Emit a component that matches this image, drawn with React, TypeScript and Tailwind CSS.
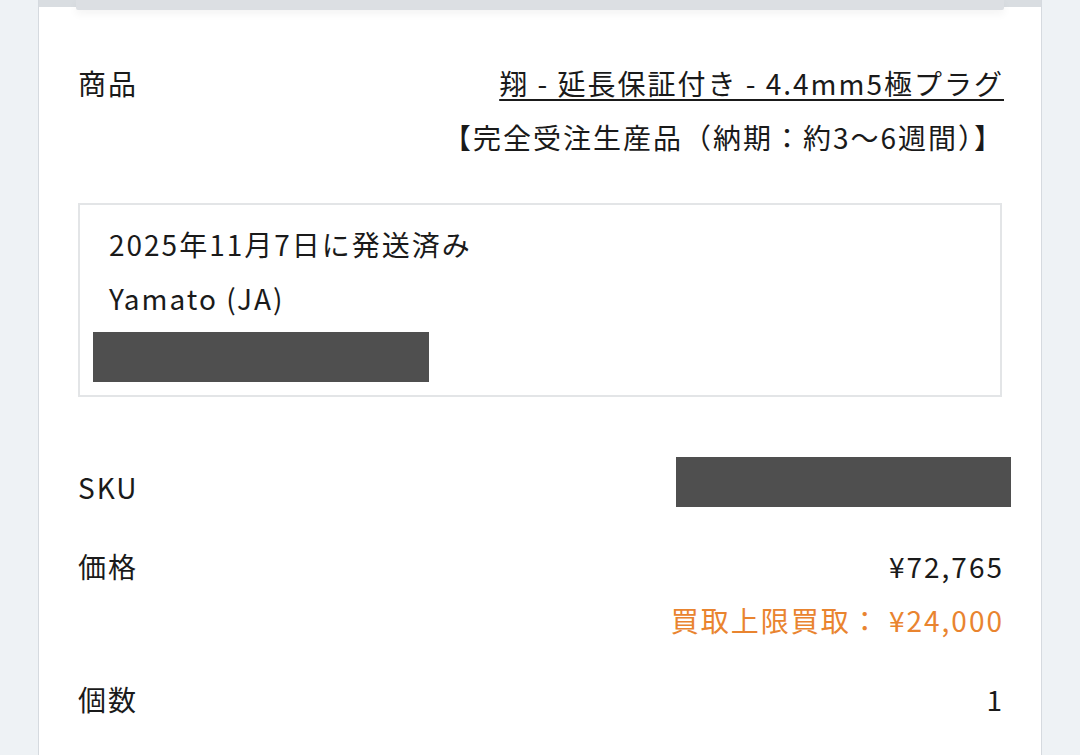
const font = { fontFamily: '"Noto Sans CJK JP", "Noto Sans", sans-serif' };

const Redacted = ({ className }: { className: string }) => (
  <div className={`bg-[#4f4f4f] ${className}`} />
);

export default function App() {
  return (
    <div className="min-h-[755px] bg-[#eef2f5] px-[38px]" style={font}>
      <div className="min-h-[755px] bg-white border-x border-[#d5dadf] text-[#1a1a1a] text-[28px] leading-[54px] tracking-[2px]">
        {/* top edge of the card above */}
        <div className="h-[7px] bg-[#d9dde1]">
          <div className="mx-[37px] h-[10px] bg-[#dcdfe3] shadow-[0_4px_8px_rgba(0,0,0,0.05)] rounded-b-[2px]" />
        </div>

        <div className="px-[39px] pt-[49px]">
          {/* 商品 */}
          <div className="flex justify-between gap-6">
            <div className="shrink-0">商品</div>
            <div className="text-right mr-[-2px]">
              <div className="underline underline-offset-[4px] decoration-[2px]">翔 - 延長保証付き - 4.4mm5極プラグ</div>
              <div>【完全受注生産品（納期：約3〜6週間）】</div>
            </div>
          </div>

          {/* shipment box */}
          <div className="mt-[39px] border-2 border-[#e3e5e7] pl-[29px] pt-[12px] pb-[13px]">
            <div>2025年11月7日に発送済み</div>
            <div>Yamato (JA)</div>
            <Redacted className="mt-[7px] ml-[-16px] w-[336px] h-[50px]" />
          </div>

          {/* SKU */}
          <div className="mt-[63px] flex justify-between items-start">
            <div>SKU</div>
            <Redacted className="mt-[-3px] mr-[-9px] w-[335px] h-[50px]" />
          </div>

          {/* 価格 */}
          <div className="mt-[25px] flex justify-between">
            <div>価格</div>
            <div className="text-right mr-[-2px]">
              <div>¥72,765</div>
              <div className="text-[#e9842f]">買取上限買取： ¥24,000</div>
            </div>
          </div>

          {/* 個数 */}
          <div className="mt-[25px] flex justify-between">
            <div>個数</div>
            <div className="mr-[-2px]">1</div>
          </div>
        </div>
      </div>
    </div>
  );
}
